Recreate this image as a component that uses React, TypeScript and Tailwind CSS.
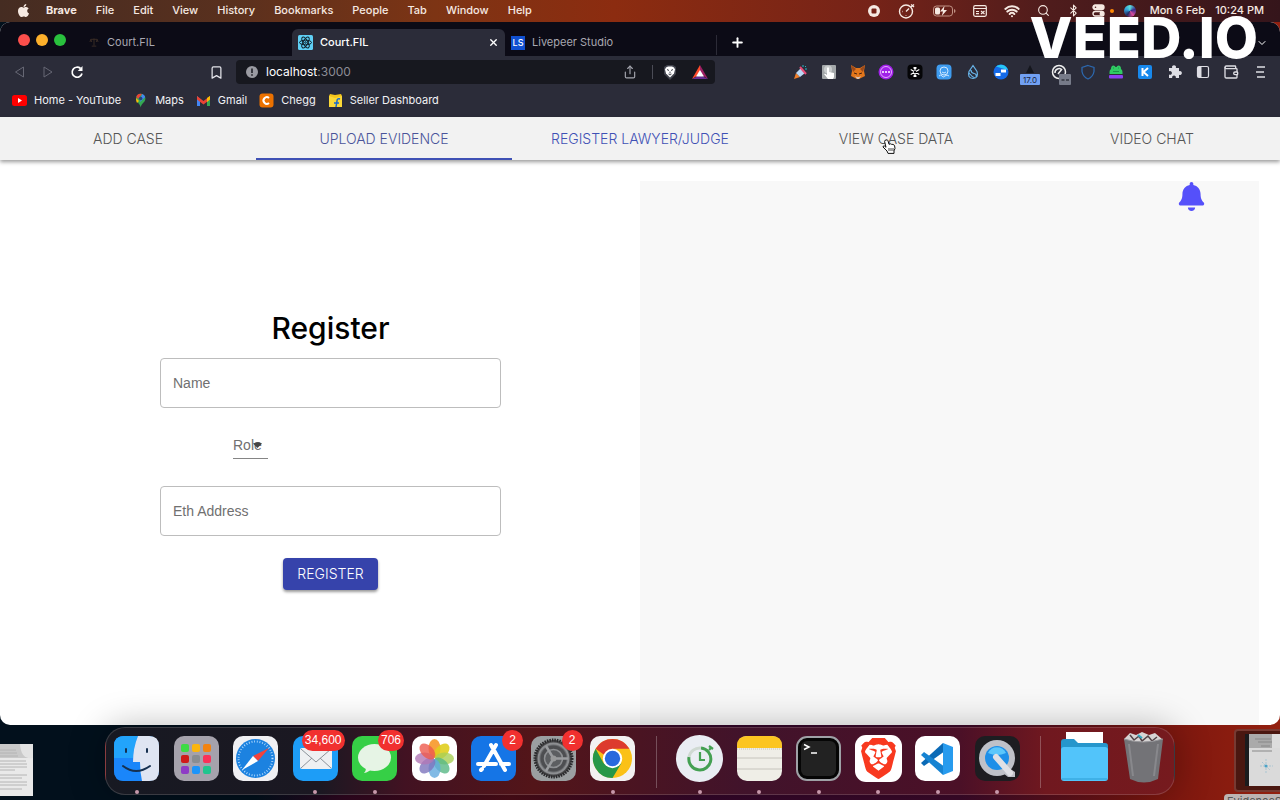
import type { ReactNode } from "react";
import { Bluetooth, Bookmark, ChevronDown, Plus, Search, Share, Wallet, Wifi, X } from "lucide-react";
import { FaApple, FaBell } from "react-icons/fa";
import { SiBrave } from "react-icons/si";

const MENUS = ["File", "Edit", "View", "History", "Bookmarks", "People", "Tab", "Window", "Help"];

const PAGE_TABS = ["ADD CASE", "UPLOAD EVIDENCE", "REGISTER LAWYER/JUDGE", "VIEW CASE DATA", "VIDEO CHAT"];

function MenuBar() {
  return (
    <header className="flex h-[22px] items-center justify-between pr-4 pb-px pl-[16px] text-[11px] font-medium text-[#f6e9e2]">
      <nav aria-label="Menu bar" className="flex items-center gap-[19px]">
        <button aria-label="Apple menu" className="-mr-1">
          <FaApple size={15} />
        </button>
        <button className="font-bold">Brave</button>
        {MENUS.map((menu) => (
          <button key={menu}>{menu}</button>
        ))}
      </nav>
      <div className="flex items-center">
        <div className="mr-3 flex items-center gap-[17px]">
          <svg width="14" height="14" viewBox="0 0 14 14">
            <circle cx="7" cy="7" r="6" fill="#f6e9e2" />
            <rect x="4.5" y="4.5" width="5" height="5" rx="1" fill="#762318" />
          </svg>
          <svg width="18" height="16" viewBox="0 0 18 16" fill="none" stroke="#f6e9e2" strokeWidth="1.4">
            <circle cx="8" cy="8.500" r="6.500" />
            <path d="M8 8.500l3-3M13 4l3-2.500M13 1.500l3 2.500M4.500 8.500H5M8 12v.5" />
          </svg>
          <svg width="23" height="12" viewBox="0 0 23 12">
            <rect x=".5" y="1" width="19" height="10" rx="3" fill="none" stroke="#c09184" />
            <rect x="2" y="2.500" width="5" height="7" rx="1.500" fill="#f6e9e2" />
            <path d="M11.500 1L7 6.500h3L8.800 11l5.200-6h-3.200z" fill="#f6e9e2" />
            <path d="M21 4v4q1.500-.5 1.500-2T21 4" fill="#c09184" />
          </svg>
          <svg width="14" height="12" viewBox="0 0 14 12" fill="none" stroke="#f6e9e2" strokeWidth="1.200">
            <rect x=".7" y=".7" width="12.600" height="10.600" rx="1.500" />
            <path d="M1 3.500h12M3 6.500h3M3 8.700h3" />
            <path d="M8 6l3.500 3M11.500 6L8 9" />
          </svg>
          <Wifi size={16} strokeWidth={3} />
          <Search size={13} />
          <Bluetooth size={13} />
        </div>
        <svg width="13" height="13" viewBox="0 0 13 13" fill="none" stroke="#f6e9e2" strokeWidth="1.400">
          <rect x="1" y="1" width="11" height="4.500" rx="2.200" fill="#f6e9e2" />
          <circle cx="3.500" cy="3.200" r=".8" fill="#4b1c1c" stroke="none" />
          <rect x="1" y="7.500" width="11" height="4.500" rx="2.200" />
          <circle cx="9.700" cy="9.700" r="1.500" fill="#f6e9e2" />
        </svg>
        <span className="ml-[5px] size-1 rounded-full bg-orange-400" />
        <span className="mr-[14px] ml-[10px] size-3 rounded-full bg-[conic-gradient(#5be0dd,#3a2b8d,#d84c9b,#22285f,#319dd8,#5be0dd)]" />
        <time className="mr-[10px]">Mon 6 Feb</time>
        <time>10:24 PM</time>
      </div>
    </header>
  );
}

function TabStrip() {
  return (
    <div className="flex h-[34px] items-end bg-[#0c0b16] pr-3 text-[11px] text-[#a9a8b1]">
      <div className="mr-[23px] mb-[10px] ml-[18px] flex gap-[6px]">
        <button aria-label="Close window" className="size-3 rounded-full bg-[#fc4f4c]" />
        <button aria-label="Minimise window" className="size-3 rounded-full bg-[#fdb02b]" />
        <button aria-label="Full screen" className="size-3 rounded-full bg-[#29c13d]" />
      </div>
      <button className="flex h-[27px] w-[203px] items-center gap-2">
        <svg width="10" height="11" viewBox="0 0 11 11" fill="none" stroke="#3d2e27">
          <path d="M2 2h7M5.500 1v8M3 9.500h5M1 5l1-3 1 3M8 5l1-3 1 3" />
        </svg>
        Court.FIL
      </button>
      <div className="flex h-[27px] w-[213px] items-center justify-between rounded-t-md bg-[#2b2c39] px-[6px] font-medium text-white">
        <button className="flex items-center gap-[7px]">
          <svg width="15" height="15" viewBox="0 0 15 15" fill="none" stroke="#10222b" strokeWidth="1">
            <rect width="15" height="15" rx="1.500" fill="#5fd0f5" stroke="none" />
            <ellipse cx="7.500" cy="7.500" rx="6" ry="2.300" />
            <ellipse cx="7.500" cy="7.500" rx="6" ry="2.300" transform="rotate(60 7.500 7.500)" />
            <ellipse cx="7.500" cy="7.500" rx="6" ry="2.300" transform="rotate(120 7.500 7.500)" />
            <circle cx="7.500" cy="7.500" r=".8" />
          </svg>
          Court.FIL
        </button>
        <button aria-label="Close tab">
          <X size={11} strokeWidth={3} />
        </button>
      </div>
      <button className="flex h-[27px] w-[211px] items-center gap-[7px] pl-[6px]">
        <span className="flex h-[14px] w-[14px] items-center justify-center bg-[#1050d0] text-[9px] font-medium text-white">LS</span>
        Livepeer Studio
      </button>
      <span className="mb-px h-5 w-px bg-[#2c2b37]" />
      <button aria-label="New tab" className="mb-[6px] ml-[13px] text-white">
        <Plus size={15} strokeWidth={3} />
      </button>
      <button aria-label="Search tabs" className="mb-[7px] ml-auto text-white">
        <ChevronDown size={12} strokeWidth={2} />
      </button>
    </div>
  );
}

const EXTENSIONS: { name: string; icon: ReactNode }[] = [
  {
    name: "Party",
    icon: (
      <>
        <path d="M2 15l2-6 4 4z" fill="#ef7d28" />
        <path d="M4 9l5-5 4 5-5 4z" fill="#b9d7f5" />
        <path d="M8 3l6 7" stroke="#e74d78" strokeWidth="2" />
        <path d="M11 1v2M14 2l-1 1M15 5h-2" stroke="#27b5c5" />
      </>
    ),
  },
  {
    name: "Touch",
    icon: (
      <>
        <rect x="1" y="1" width="14" height="14" rx="1" fill="#a4a8aa" />
        <circle cx="7" cy="5.500" r="4" fill="#c9cccd" />
        <path d="M6 4q1-1.500 2 0v4l5 1v4l-1 2H7l-4-5q1-1 3 1z" fill="#fff" />
      </>
    ),
  },
  {
    name: "MetaMask",
    icon: (
      <>
        <path d="M1 1l5 3h4l5-3-1 6 1 5-4 2-2 1H7l-2-1-4-2 1-5z" fill="#e2761b" />
        <path d="M1 1l5 4-3 3zM15 1l-5 4 3 3z" fill="#9c4a1c" />
        <path d="M5 12l2 1h2l2-1-2 3H7z" fill="#d7c1b3" />
        <path d="M4 9l3 1M12 9l-3 1" stroke="#45210d" />
      </>
    ),
  },
  {
    name: "Console",
    icon: (
      <>
        <circle cx="8" cy="8" r="7.500" fill="#a020e8" />
        <circle cx="8" cy="8" r="5.500" fill="none" stroke="#e3a8ff" />
        <path d="M4 8h2M7 8h2M10 8h2" stroke="#fff" strokeWidth="1.500" />
      </>
    ),
  },
  {
    name: "Snowflake",
    icon: (
      <>
        <rect x=".5" y=".5" width="15" height="15" rx="4" fill="#050507" />
        <path
          d="M8 3v10M3.700 5.500l8.600 5M12.300 5.500l-8.600 5M6.500 3.500L8 5l1.500-1.500M6.500 12.500L8 11l1.500 1.500"
          fill="none"
          stroke="#fff"
          strokeWidth="1.200"
        />
        <circle cx="8" cy="8" r="1.200" fill="#050507" />
      </>
    ),
  },
  {
    name: "Ghost",
    icon: (
      <>
        <rect x=".5" y=".5" width="15" height="15" rx="4" fill="#3f9cef" />
        <circle cx="8" cy="7" r="4" fill="none" stroke="#cfe8ff" />
        <path d="M6 8q2 2 4 0M3 12q2-2 3 0t3 0 4 0" fill="none" stroke="#cfe8ff" />
      </>
    ),
  },
  {
    name: "Sui",
    icon: (
      <path d="M8 1.500L4 7.500Q2 14 8 14.500 14 14 12 7.500zM6 6q0 3 3 3.500t2 3.500M4 9q3 4 6 5" fill="none" stroke="#67b3e8" strokeWidth="1.200" />
    ),
  },
  {
    name: "Bridge",
    icon: (
      <>
        <circle cx="8" cy="8" r="7.500" fill="#156ae8" />
        <path d="M3 2.500A7.500 7.500 0 0 1 15 6L8 4z" fill="#26c7f4" />
        <path d="M2.500 9h5v3h-5zM8 5.500h5v3H8z" fill="#fff" />
      </>
    ),
  },
  {
    name: "Version 17.0",
    icon: (
      <>
        <path d="M8 1l4 8H4z" fill="#15161d" />
        <rect x="-2" y="10" width="20" height="11" rx="1" fill="#71a0f2" />
        <text x="8" y="18.500" textAnchor="middle" fontSize="8" fill="#182440">17.0</text>
      </>
    ),
  },
  {
    name: "Speed",
    icon: (
      <>
        <circle cx="8" cy="8" r="6.500" fill="none" stroke="#efefef" strokeWidth="1.500" />
        <path d="M4 9a4 4 0 0 1 7-3M7 10l4-5" fill="none" stroke="#efefef" strokeWidth="1.500" />
        <rect x="8" y="10" width="12" height="11" rx="1" fill="#777b89" />
        <path d="M10.500 16h3M15 16h3" stroke="#15161d" />
      </>
    ),
  },
  {
    name: "Shield",
    icon: <path d="M8 1.500l6 2v4Q13 13 8 15 3 13 2 7.500v-4z" fill="none" stroke="#2c67ad" strokeWidth="1.300" />,
  },
  {
    name: "Frog",
    icon: (
      <>
        <path d="M1.500 10V8q0-2 1.500-3Q3 1.500 5.500 1.500 7 1.500 7.500 3h1q.5-1.500 2-1.500Q13 1.500 13 5q1.500 1 1.500 3v2z" fill="#2fcb63" />
        <path d="M5 4h1M10 4h1M5 7.500h6" stroke="#1c9448" />
        <rect x="1" y="11" width="14" height="3.500" rx="1" fill="#8c3ff0" />
      </>
    ),
  },
  {
    name: "Keplr",
    icon: (
      <>
        <rect x="1" y="1" width="14" height="14" rx="2" fill="#1789ed" />
        <path d="M5.500 4v8M11 4L6.500 8l4.500 4" fill="none" stroke="#fff" strokeWidth="2" />
      </>
    ),
  },
  {
    name: "Extensions",
    icon: (
      <path
        d="M3 4h3.200a2 2 0 1 1 3.600 0H13v3.200a2 2 0 1 1 0 3.600V14H9.800a1.900 1.900 0 1 0-3.600 0H3v-3.500a1.900 1.900 0 1 0 0-3.200z"
        fill="#dedee4"
      />
    ),
  },
  {
    name: "Sidebar",
    icon: (
      <>
        <rect x="2.500" y="2.500" width="11" height="11" rx="1.500" fill="none" stroke="#dedee4" strokeWidth="1.200" />
        <path d="M3 3h3.500v10H3z" fill="#dedee4" />
      </>
    ),
  },
  { name: "Wallet", icon: <Wallet size={16} color="#dedee4" strokeWidth={2} /> },
  { name: "Menu", icon: <path d="M5 3h8M4 8h8M5 13h8" stroke="#dedee4" strokeWidth="1.400" /> },
];

function Toolbar() {
  return (
    <div className="flex h-8 items-center bg-[#2b2c39] pr-3 pl-[14px]">
      <div className="flex w-[222px] items-center">
        <button aria-label="Back" className="mr-4">
          <svg width="12" height="14" viewBox="0 0 12 14" fill="none" stroke="#666774">
            <path d="M9.500 2v10L1.500 7z" />
          </svg>
        </button>
        <button aria-label="Forward" className="mr-4">
          <svg width="12" height="14" viewBox="0 0 12 14" fill="none" stroke="#666774">
            <path d="M2 2v10l8-5z" />
          </svg>
        </button>
        <button aria-label="Reload">
          <svg width="14" height="14" viewBox="0 0 14 14" fill="none" stroke="#fff" strokeWidth="1.700">
            <path d="M12 8.500A5 5 0 1 1 10.500 3.500" />
            <path d="M12.500 1v5H7.800z" fill="#fff" stroke="none" />
          </svg>
        </button>
        <button aria-label="Bookmark this page" className="mr-[12px] ml-auto text-[#e4e4ea]">
          <Bookmark size={15} strokeWidth={2} />
        </button>
      </div>
      <div className="flex h-6 w-[479px] items-center rounded bg-[#17181f] pr-[7px] pl-[10px] text-[#a4a5ae]">
        <svg className="mr-2" width="12" height="12" viewBox="0 0 12 12">
          <circle cx="6" cy="6" r="6" fill="#9a9ba2" />
          <path d="M6 2.500v4.500M6 8.300v1.500" stroke="#17181f" strokeWidth="1.500" />
        </svg>
        <p className="flex-1 text-xs text-[#8c8d96]">
          <span className="text-white">localhost</span>:3000
        </p>
        <button aria-label="Share">
          <Share size={14} strokeWidth={2} />
        </button>
        <span className="mx-[15px] h-[14px] w-px bg-[#4b4c56]" />
        <button aria-label="Brave Shields" className="mr-[15px] -ml-[5px]">
          <svg width="14" height="15" viewBox="0 0 14 15">
            <path d="M1 2l3-2h6l3 2v7l-6 6-6-6z" fill="#41434d" />
            <path d="M3 2.500l2-1h4l2 1 1 2-1 4-2 2-2 2-2-2-2-2-1-4z" fill="#fff" />
            <path d="M4 4.500l2 1M10 4.500l-2 1M7 6.500v2M5.500 9L7 10l1.500-1" stroke="#41434d" fill="none" />
          </svg>
        </button>
        <button aria-label="Brave Rewards">
          <svg width="16" height="14" viewBox="0 0 16 14">
            <path d="M8 0L0 14l8-5z" fill="#ff4a2c" />
            <path d="M8 0l8 14-8-5z" fill="#9e1f63" />
            <path d="M0 14h16l-8-4z" fill="#662d91" />
            <path d="M8 5l4 6.500H4z" fill="#fff" />
          </svg>
        </button>
      </div>
      <div className="ml-[77px] flex flex-1 justify-between">
        {EXTENSIONS.map(({ name, icon }) => (
          <button key={name} aria-label={name}>
            <svg className="overflow-visible" width="16" height="16" viewBox="0 0 16 16">
              {icon}
            </svg>
          </button>
        ))}
      </div>
    </div>
  );
}

const BOOKMARKS: { label: string; icon: ReactNode }[] = [
  {
    label: "Home - YouTube",
    icon: (
      <>
        <rect y="2" width="15" height="11" rx="2.500" fill="#f00" />
        <path d="M6 5l4 2.500L6 10z" fill="#fff" />
      </>
    ),
  },
  {
    label: "Maps",
    icon: (
      <>
        <path d="M3 5.500a4.700 4.700 0 0 1 9.400 0c0 4-4 4.500-4.700 9C7 10 3 9.500 3 5.500z" fill="#34a853" />
        <path d="M3.300 4A4.700 4.700 0 0 1 9 1L5 6z" fill="#ea4335" />
        <path d="M9 1a4.700 4.700 0 0 1 3.200 3L7 9z" fill="#4285f4" />
        <path d="M3 5l3 3-2 2Q3 8 3 5z" fill="#fbbc04" />
        <circle cx="7.700" cy="5.500" r="1.700" fill="#24427c" />
      </>
    ),
  },
  {
    label: "Gmail",
    icon: (
      <>
        <path d="M1 3v10h3V6z" fill="#4285f4" />
        <path d="M14 3v10h-3V6z" fill="#34a853" />
        <path d="M1 3l6.500 5L14 3v3.500L7.500 11.500 1 6.500z" fill="#ea4335" />
        <path d="M11 5l3-2v3.500L11 9z" fill="#fbbc04" />
      </>
    ),
  },
  {
    label: "Chegg",
    icon: (
      <>
        <rect x=".5" y=".5" width="14" height="14" rx="3" fill="#eb7100" />
        <path d="M10 5a3.300 3.300 0 1 0 0 5" fill="none" stroke="#fff" strokeWidth="2" />
      </>
    ),
  },
  {
    label: "Seller Dashboard",
    icon: (
      <>
        <path d="M1 3h13v11H1z" fill="#fbd938" />
        <path d="M1 3l1-2 5 1 6-1 1 2-7 2z" fill="#f5c51b" />
        <path d="M12 6q-3-1-3 2l-1 6M6 10h5" fill="none" stroke="#1769ce" strokeWidth="1.500" />
      </>
    ),
  },
];

function BookmarksBar() {
  return (
    <nav aria-label="Bookmarks" className="flex h-[29px] items-center gap-3 bg-[#2b2c39] px-3 pb-1 text-[11px] text-[#f1f1f5]">
      {BOOKMARKS.map(({ label, icon }) => (
        <a key={label} href="#" className="flex items-center gap-[7px]">
          <svg width="15" height="15" viewBox="0 0 15 15">
            {icon}
          </svg>
          {label}
        </a>
      ))}
    </nav>
  );
}

function PageTabs() {
  return (
    <nav className="relative z-10 grid h-[43px] grid-cols-5 bg-[#f2f2f2] text-sm font-light text-[#555] shadow-[0_2px_4px_rgba(0,0,0,0.4)]">
      {PAGE_TABS.map((tab) => (
        <button
          key={tab}
          className={
            tab === "UPLOAD EVIDENCE"
              ? "border-b-2 border-[#3f51b5] pt-[2px] text-[#4a549a]"
              : tab === "REGISTER LAWYER/JUDGE"
                ? "border-b-2 border-transparent pt-[2px] text-[#3f51b5]"
                : "border-b-2 border-transparent pt-[2px]"
          }
        >
          {tab}
        </button>
      ))}
      {/* pointer */}
      <svg className="absolute top-[22px] left-[69%] -ml-px" width="14" height="16" viewBox="0 0 14 16">
        <path
          d="M4 1q1.500-.8 2 .8l1 3.500 1.500-.5 1.200.6 1.300 0 1.500 1 .5 3-1 2.500v2.500H6L5 12 1 8q0-1.500 1.500-1L4 8.300 2.600 2.500Q2.500 1.200 4 1z"
          fill="#fff"
          stroke="#111"
        />
        <path d="M7 9v3M9 9v3M11 9v3" stroke="#111" strokeWidth=".8" />
      </svg>
    </nav>
  );
}

function RegisterForm() {
  return (
    <form className="flex w-[341px] flex-col items-center font-['Liberation_Sans',sans-serif] text-sm">
      <h1 className="mb-3 font-['Inter',sans-serif] text-[30px] leading-9 font-medium text-black">Register</h1>
      <input
        aria-label="Name"
        placeholder="Name"
        className="h-[50px] w-full rounded border border-[#bdbdbd] bg-white px-3 placeholder:text-[#707070]"
      />
      <div className="relative mt-6 mr-[160px] mb-[27px] h-[27px] w-[35px] border-b border-[#858585]">
        <select id="role" defaultValue="" className="h-full w-full appearance-none bg-transparent">
          <option value="" />
        </select>
        <label htmlFor="role" className="absolute top-[3px] left-0 text-[#707070]">
          Role
        </label>
        <svg className="absolute top-[10px] right-[6px]" width="9" height="6" viewBox="0 0 9 6">
          <path d="M0 1.500Q4.500-1 9 1.500L4.500 6z" fill="#444" />
        </svg>
      </div>
      <input
        aria-label="Eth Address"
        placeholder="Eth Address"
        className="h-[50px] w-full rounded border border-[#bdbdbd] bg-white px-3 placeholder:text-[#707070]"
      />
      <button
        type="button"
        className="mt-[22px] h-8 rounded bg-[#3643ab] px-[14px] font-['Inter',sans-serif] text-sm font-light text-white shadow-[0_2px_3px_rgba(0,0,0,0.4)]"
      >
        REGISTER
      </button>
    </form>
  );
}

const DOCK_APPS: { name: string; badge?: string; running?: boolean; icon: ReactNode }[] = [
  {
    name: "Finder",
    running: true,
    icon: (
      <>
        <rect width="45" height="45" rx="10" fill="#1d8cf8" />
        <path d="M0 22V10Q0 0 10 0h14q-5 12-5 26h7q-.5 10 2 19H10Q0 45 0 35z" fill="#1a86fa" />
        <path d="M0 22V10Q0 0 10 0h14q-4 9-5 22z" fill="#22a4fb" />
        <path d="M24 0h11q10 0 10 10v25q0 10-10 10h-7q-2-9-2-19h-7q0-14 5-26z" fill="#dfe5f2" />
        <path d="M12 13v3M33 13v3M9 30q13 10 27 0" fill="none" stroke="#16304f" strokeWidth="2" strokeLinecap="round" />
      </>
    ),
  },
  {
    name: "Launchpad",
    icon: (
      <>
        <rect width="45" height="45" rx="10" fill="#a5a2ac" />
        <rect x="7" y="8" width="8" height="8" rx="2" fill="#3ddb45" />
        <rect x="18" y="8" width="8" height="8" rx="2" fill="#fbb50f" />
        <rect x="29" y="8" width="8" height="8" rx="2" fill="#f38311" />
        <rect x="7" y="19" width="8" height="8" rx="2" fill="#d01a1b" />
        <rect x="18" y="19" width="8" height="8" rx="2" fill="#898d92" />
        <rect x="29" y="19" width="8" height="8" rx="2" fill="#fa3158" />
        <rect x="7" y="30" width="8" height="8" rx="2" fill="#8e3cc6" />
        <rect x="18" y="30" width="8" height="8" rx="2" fill="#1c94fa" />
        <rect x="29" y="30" width="8" height="8" rx="2" fill="#20c58e" />
      </>
    ),
  },
  {
    name: "Safari",
    icon: (
      <>
        <rect width="45" height="45" rx="10" fill="#f0f0f3" />
        <circle cx="22.500" cy="22.500" r="19.500" fill="#1c82e0" />
        <circle cx="22.500" cy="22.500" r="17" fill="none" stroke="#bfe0ff" strokeWidth="2" strokeDasharray=".8 1.900" />
        <path d="M36 12L20 20l5 5z" fill="#f3423b" />
        <path d="M9 34l11-14 5 5z" fill="#fff" />
      </>
    ),
  },
  {
    name: "Mail",
    badge: "34,600",
    running: true,
    icon: (
      <>
        <rect width="45" height="45" rx="10" fill="#1d9df7" />
        <rect x="7" y="12" width="32" height="21" rx="2" fill="#eef0f2" />
        <path d="M8 13l15 13 15-13M8 32l11-10M38 32L27 22" fill="none" stroke="#8b9299" />
      </>
    ),
  },
  {
    name: "Messages",
    badge: "706",
    running: true,
    icon: (
      <>
        <rect width="45" height="45" rx="10" fill="#36cf46" />
        <ellipse cx="22.500" cy="21.500" rx="16.500" ry="13.500" fill="#e6f4e5" />
        <path d="M14 32q0 3-2 5 5-1 7-4z" fill="#e6f4e5" />
      </>
    ),
  },
  {
    name: "Photos",
    icon: (
      <>
        <rect width="45" height="45" rx="10" fill="#fff" />
        <ellipse cx="22.500" cy="12.500" rx="6" ry="9.500" fill="#f79828" fillOpacity=".9" />
        <ellipse cx="22.500" cy="12.500" rx="6" ry="9.500" fill="#e0ce1e" fillOpacity=".9" transform="rotate(45 22.500 22.500)" />
        <ellipse cx="22.500" cy="12.500" rx="6" ry="9.500" fill="#a9d055" fillOpacity=".8" transform="rotate(90 22.500 22.500)" />
        <ellipse cx="22.500" cy="12.500" rx="6" ry="9.500" fill="#58b885" fillOpacity=".8" transform="rotate(135 22.500 22.500)" />
        <ellipse cx="22.500" cy="12.500" rx="6" ry="9.500" fill="#62a9df" fillOpacity=".8" transform="rotate(180 22.500 22.500)" />
        <ellipse cx="22.500" cy="12.500" rx="6" ry="9.500" fill="#7d74bd" fillOpacity=".8" transform="rotate(225 22.500 22.500)" />
        <ellipse cx="22.500" cy="12.500" rx="6" ry="9.500" fill="#b277b5" fillOpacity=".8" transform="rotate(270 22.500 22.500)" />
        <ellipse cx="22.500" cy="12.500" rx="6" ry="9.500" fill="#ee5a4e" fillOpacity=".8" transform="rotate(315 22.500 22.500)" />
      </>
    ),
  },
  {
    name: "App Store",
    badge: "2",
    icon: (
      <>
        <rect width="45" height="45" rx="10" fill="#1575e6" />
        <path d="M25 9L13 30M20 9l14 25M7 28h18M30 28h8M11 33l-1 1" stroke="#fff" strokeWidth="4" strokeLinecap="round" />
      </>
    ),
  },
  {
    name: "System Settings",
    badge: "2",
    icon: (
      <>
        <rect width="45" height="45" rx="10" fill="#9b9fa1" />
        <circle cx="22.500" cy="22.500" r="18.500" fill="#4a4a4c" stroke="#29292b" strokeWidth="3" strokeDasharray="1.500 1" />
        <circle cx="22.500" cy="22.500" r="15" fill="#6b6d70" stroke="#8d8f92" strokeWidth="2" />
        <circle cx="22.500" cy="22.500" r="13" fill="#4d4e51" />
        <circle cx="22.500" cy="22.500" r="9" fill="#5c5e61" stroke="#8d8f92" strokeWidth="1.500" />
        <path d="M22.500 22.500H37M22.500 22.500L15 10M22.500 22.500L15 35" stroke="#9a9c9f" strokeWidth="2.500" />
        <circle cx="22.500" cy="22.500" r="3" fill="#98999a" />
      </>
    ),
  },
  {
    name: "Chrome",
    running: true,
    icon: (
      <>
        <rect width="45" height="45" rx="10" fill="#f2f1f1" />
        <circle cx="22.500" cy="22.500" r="19.500" fill="#fbc116" />
        <path d="M5.600 12.700A19.500 19.500 0 0 1 39.400 12.700H22.500v12z" fill="#dd3a2d" />
        <path d="M5.600 12.700A19.500 19.500 0 0 0 22.500 42l9-15-9 5-9-5z" fill="#279748" />
        <circle cx="22.500" cy="22.500" r="9.700" fill="#fff" />
        <circle cx="22.500" cy="22.500" r="7.700" fill="#2869dd" />
      </>
    ),
  },
  {
    name: "Timer",
    running: true,
    icon: (
      <>
        <circle cx="22.500" cy="22.500" r="23.500" fill="#eaedf3" />
        <path d="M24 12a11 11 0 1 1-12 9" fill="none" stroke="#44a052" strokeWidth="3" />
        <path d="M12 21A11 11 0 0 1 24 12" fill="none" stroke="#cfd9d2" strokeWidth="3" />
        <path d="M23 16v8h5M32 14l3-3M32 10l4 3" fill="none" stroke="#44a052" strokeWidth="2.200" />
      </>
    ),
  },
  {
    name: "Notes",
    running: true,
    icon: (
      <>
        <rect width="45" height="45" rx="10" fill="#efeee7" />
        <path d="M0 12v-2Q0 0 10 0h25q10 0 10 10v2z" fill="#fcc521" />
        <path d="M0 13h45" stroke="#c6c4bc" strokeDasharray="1 1" />
        <path d="M0 22h45M0 33h45" stroke="#c6c4bc" />
      </>
    ),
  },
  {
    name: "Terminal",
    running: true,
    icon: (
      <>
        <rect x="1" y="1" width="43" height="43" rx="10" fill="#050505" stroke="#9fa1a6" strokeWidth="2" />
        <rect x="5" y="5" width="35" height="35" rx="6" fill="#222" />
        <path d="M8 8.500l5 2.500-5 2.500M15 17h6" fill="none" stroke="#fff" strokeWidth="1.500" />
      </>
    ),
  },
  {
    name: "Brave",
    running: true,
    icon: (
      <>
        <rect x="-1" y="-1" width="47" height="47" rx="11" fill="#fff" />
        <SiBrave size={41} x={2} y={2} color="#f8391f" />
      </>
    ),
  },
  {
    name: "Visual Studio Code",
    running: true,
    icon: (
      <>
        <rect width="45" height="45" rx="10" fill="#fff" />
        <path d="M28 7L6 27l3 3 21-15z" fill="#0b6ab6" />
        <path d="M28 39L6 19l3-3 21 15z" fill="#1683d2" />
        <path d="M28 7l10 4v24l-10 4z" fill="#279bee" />
      </>
    ),
  },
  {
    name: "QuickTime Player",
    running: true,
    icon: (
      <>
        <rect width="45" height="45" rx="10" fill="#1d1d21" />
        <circle cx="22" cy="22" r="18" fill="#bfc1c8" />
        <path d="M34 32l6 4v5h-7l-5-4z" fill="#bfc1c8" />
        <circle cx="22" cy="22" r="12" fill="#1e8fe8" />
        <path d="M13 17a10 10 0 0 1 18 0q-9 4-18 0z" fill="#5cc7fb" />
        <path d="M21 21l14 16" stroke="#dfe0e5" strokeWidth="6" strokeLinecap="round" />
      </>
    ),
  },
  {
    name: "Downloads",
    icon: (
      <>
        <rect x="4" y="-4" width="37" height="20" fill="#fff" />
        <path d="M-1 6q0-3 3-3h10l4 4h27q3 0 3 3v8H-1z" fill="#2696cc" />
        <rect x="-1" y="11" width="47" height="34" rx="3" fill="#52c4fa" />
        <path d="M0 43h45" stroke="#2c9ed4" />
      </>
    ),
  },
  {
    name: "Bin",
    icon: (
      <>
        <path d="M3 3l6-6 6 2 6-3 7 3 6-2 7 6-3 6H6z" fill="#d7d4d4" />
        <path d="M9-1l4 5 5-4 3 5 6-5 4 5 5-4" fill="none" stroke="#514448" strokeWidth="1.500" />
        <path d="M17-1l4 3" stroke="#31a8c1" strokeWidth="2" />
        <path d="M3 3q19 6 39 0l-5 40q-14 7-28 0z" fill="#737377" />
        <path d="M3 3q19 6 39 0" fill="none" stroke="#98989c" />
        <path d="M8 8l4 32M37 8l-4 32" fill="none" stroke="#88888c" strokeWidth="2" />
      </>
    ),
  },
];

function DockIcon({ name, badge, running, icon }: (typeof DOCK_APPS)[number]) {
  return (
    <button aria-label={name} className="relative flex flex-col items-center">
      <svg className="overflow-visible" width="45" height="45" viewBox="0 0 45 45">
        {icon}
      </svg>
      {running && <span className="mt-[9px] size-1 rounded-full bg-[#c799ab]" />}
      {badge && (
        <span className="absolute -top-[6px] -right-[7px] h-[21px] min-w-[21px] rounded-full bg-[#f1302f] px-[3px] font-['Liberation_Sans',sans-serif] text-xs leading-[21px] text-white">
          {badge}
        </span>
      )}
    </button>
  );
}

function DockDivider() {
  return (
    <span className="flex h-[52px] w-[13px] justify-center">
      <span className="w-px bg-white/25" />
    </span>
  );
}

function Dock() {
  return (
    <footer className="relative flex h-[75px] justify-center pt-[2px]">
      <nav
        aria-label="Dock"
        className="flex h-[68px] w-[1070px] items-start justify-between rounded-[20px] border border-white/15 bg-[linear-gradient(90deg,#171922_0%,#1b1822_20%,#421222_28%,#531519_40%,#41132b_60%,#4b1027_80%,#70181f_88%,#761a1e_100%)] px-2 pt-2 shadow-[0_0_36px_rgba(0,0,0,0.28)]"
      >
        {DOCK_APPS.slice(0, 9).map((app) => (
          <DockIcon key={app.name} {...app} />
        ))}
        <DockDivider />
        {DOCK_APPS.slice(9, 15).map((app) => (
          <DockIcon key={app.name} {...app} />
        ))}
        <DockDivider />
        {DOCK_APPS.slice(15).map((app) => (
          <DockIcon key={app.name} {...app} />
        ))}
      </nav>

      {/* desktop files */}
      <svg className="absolute top-[19px] left-0" width="33" height="52" viewBox="0 0 33 52">
        <path d="M0 0h33v52H0z" fill="#e9e9e9" />
        <path d="M0 0h33v14H0z" fill="#c9c9c9" />
        <path d="M20 0h13v14q-12 2-13-14z" fill="#e3e3e3" />
        <path d="M0 6h16M0 9h17M0 12h18M0 17h26M0 20h27M0 23h27M0 26h15M0 31h27M0 34h22M0 38h27M0 41h27M0 45h22" stroke="#b4b4b4" />
      </svg>
      <div className="absolute top-1 right-0 h-[63px] w-[46px] rounded-l-sm border-2 border-r-0 border-[#8a4a42]/70 bg-[#4a1710]">
        <svg className="absolute top-[3px] right-0" width="35" height="52" viewBox="0 0 35 52">
          <path d="M0 0h35v52H0z" fill="#1b1b1d" />
          <path d="M4 0h31v52H4z" fill="#dadada" />
          <path d="M4 0h31v14H4z" fill="#aaa" />
          <path d="M10 5h16M13 8h14M16 12h9M7 17h20" stroke="#888" />
          <path d="M21 25v14M15 32h13M17 28l8 8" stroke="#a9c5d2" strokeDasharray="2 1" />
          <circle cx="21" cy="32" r="1.500" fill="#4aa3c8" />
          <path d="M27 0h8v14h-8z" fill="#ddd" />
        </svg>
      </div>
      <div className="absolute right-0 bottom-0 h-[6px] w-14 overflow-hidden rounded-tl-sm bg-[#bcb4b3] pl-[3px] text-[11px] leading-[14px] text-[#555]">
        EvidenceS
      </div>
    </footer>
  );
}

export default function App() {
  return (
    <div className="relative flex min-h-screen flex-col overflow-hidden bg-[linear-gradient(90deg,#02101c_0%,#02101c_20%,#300720_27%,#4b0d18_40%,#34062a_55%,#3c0a2a_75%,#7b160f_90%,#93200f_100%)] font-['Inter',sans-serif]">
      <div className="bg-[linear-gradient(90deg,#452c22_0%,#59301e_18%,#7d3414_34%,#8c2c10_48%,#762318_68%,#4f1c1c_82%,#35151b_100%)]">
        <MenuBar />
      </div>
      <main className="flex flex-1 flex-col overflow-hidden rounded-[10px] bg-white">
        <TabStrip />
        <Toolbar />
        <BookmarksBar />
        <PageTabs />
        <div className="grid flex-1 grid-cols-2 px-[21px] pt-[21px]">
          <section className="flex items-center justify-center pb-[6px]">
            <RegisterForm />
          </section>
          <section className="bg-[#f8f8f8]">
            <div className="flex justify-end pt-px pr-[53px]">
              <button aria-label="Notifications" className="text-[#5550fa]">
                <FaBell size={29} />
              </button>
            </div>
          </section>
        </div>
      </main>
      <Dock />
      <div className="absolute top-[10px] right-[22px] z-20 text-[56px] leading-none font-extrabold text-white">VEED.IO</div>
    </div>
  );
}
